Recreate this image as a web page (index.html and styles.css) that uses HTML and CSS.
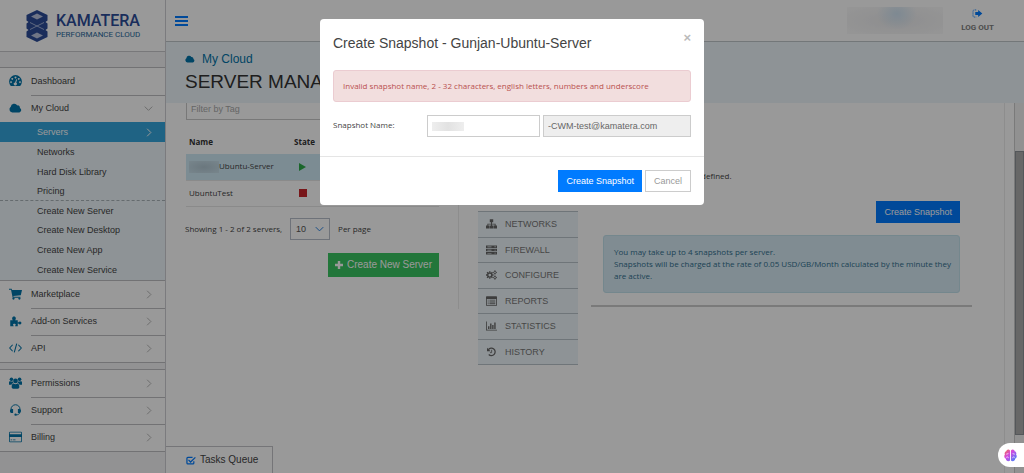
FILE: index.html
```html
<!DOCTYPE html>
<html lang="en">
<head>
<meta charset="utf-8">
<title>Server Management</title>
<link rel="stylesheet" href="styles.css">
</head>
<body>
<svg class="sprite" aria-hidden="true">
  <symbol id="cloud" viewBox="0 0 16 12"><path d="M4 11.5A3.8 3.8 0 0 1 2.2 4.6 4.3 4.3 0 0 1 10.200 2.800 2.600 2.600 0 0 1 13.400 5.900 3 3 0 0 1 12.800 11.500Z"/></symbol>
  <symbol id="gauge" viewBox="0 0 16 14"><path fill-rule="evenodd" d="M2.200 13A7.900 7.900 0 1 1 13.800 13ZM8 1.600a1.100 1.100 0 1 0 .01 0ZM4 3.300a1.100 1.100 0 1 0 .01 0ZM2.500 7.200a1.100 1.100 0 1 0 .01 0ZM12 3.300a1.100 1.100 0 1 0 .01 0ZM13.500 7.200a1.100 1.100 0 1 0 .01 0ZM8.900 4.700 7.500 8.700a1.900 1.900 0 1 0 1.400.4L10 5Z"/></symbol>
  <symbol id="cart" viewBox="0 0 16 14"><path d="M0 .5h3.300l.4 1.500H16l-1.500 6.500-9.200 1 .3 1H14v1H4.500L2.500 1.800H0Z"/><circle cx="5.500" cy="12.600" r="1.400"/><circle cx="12.800" cy="12.600" r="1.400"/></symbol>
  <symbol id="puzzle" viewBox="0 0 16 16"><path d="M1 7h3.500C3 5.500 3 2 6 2s3 3.500 1.500 5H11v3c1 0 1-1.500 3-1.500 2.500 0 2.500 4 0 4-2 0-2-1.500-3-1.500v4H7.500c0-1 .8-1.500.8-2.300 0-1.600-3.600-1.600-3.600 0 0 .8.8 1.300.8 2.300H1Z"/></symbol>
  <symbol id="code" viewBox="0 0 16 12"><path class="line" d="M4.500 2 .8 6l3.700 4M11.500 2l3.700 4-3.700 4M9.500.7l-3 10.600"/></symbol>
  <symbol id="users" viewBox="0 0 16 14"><circle cx="3" cy="2.500" r="2.200"/><circle cx="13" cy="2.500" r="2.200"/><circle cx="8" cy="4.500" r="2.900"/><path d="M0 9V6.500C0 5 1 4.500 2 4.900c1 .5 2 .4 2.600 0 0 1 .3 1.600.8 2.200C4 7.300 3.500 8 3.200 9ZM16 9V6.500c0-1.500-1-2-2-1.600-1 .5-2 .4-2.600 0 0 1-.3 1.600-.8 2.200 1.400.2 1.900.9 2.200 1.900ZM3.300 12c0-3 1-4.500 2.400-4.300 1.500 1 3.100 1 4.600 0 1.400-.2 2.400 1.300 2.400 4.300 0 1.300-.7 2-2 2H5.300c-1.300 0-2-.7-2-2Z"/></symbol>
  <symbol id="headset" viewBox="0 0 16 16"><path class="line" d="M2 9V7a6 6 0 0 1 12 0v2M13.500 11c0 2.500-2 3.500-5 3.500"/><path d="M3 6.500h1.800V12H3C0 12-.3 6.500 3 6.500ZM13 6.500h-1.800V12H13c3 0 3.300-5.500 0-5.500Z"/><circle cx="8" cy="14.300" r="1.500"/></symbol>
  <symbol id="card" viewBox="0 0 16 13"><path fill-rule="evenodd" d="M1 0h14l1 1v11l-1 1H1l-1-1V1ZM1 1v2h14V1ZM1 6.500V12h14V6.500ZM2 9.500h2v1H2ZM5 9.500h3v1H5Z"/></symbol>
  <symbol id="right" viewBox="0 0 8 12"><path class="line" d="m1.500 1 5 5-5 5"/></symbol>
  <symbol id="down" viewBox="0 0 12 8"><path class="line" d="m1 1.500 5 5 5-5"/></symbol>
  <symbol id="logout" viewBox="0 0 16 14"><path class="line dash" d="M6 1.500H3Q1 1.500 1 3.500v7q0 2 2 2h3"/><path d="M4.500 4.500H9V1.500L15.500 7 9 12.500v-3H4.500Z"/></symbol>
  <symbol id="sitemap" viewBox="0 0 16 14"><path d="M5.500 0h5v4.500H8.700v2H14V9h2v4.500h-5V9h1.700V7.700H8.700V9h1.800v4.500h-5V9h1.800V7.700H3.300V9H5v4.500H0V9h2V6.500h5.300v-2H5.500Z"/></symbol>
  <symbol id="rows" viewBox="0 0 16 14"><path fill-rule="evenodd" d="M0 .5h16v3.700H0ZM0 5.200h16v3.700H0ZM0 9.900h16v3.600H0ZM2 1.900v1h6v-1ZM2 6.600v1h6v-1ZM2 11.200v1h6v-1ZM12.500 1.700v1.200h1.500V1.700ZM12.500 6.500v1.200h1.500V6.500ZM12.500 11v1.200h1.500V11Z"/></symbol>
  <symbol id="cogs" viewBox="0 0 16 14"><circle class="ring" cx="5.500" cy="7" r="3"/><path class="teeth" d="M5.500 1.500v2M5.500 10.500v2M0 7h2M9 7h2M1.600 3.100 3 4.500M8 9.500l1.400 1.400M1.600 10.900 3 9.500M8 4.500l1.400-1.400"/><circle class="ring thin" cx="13" cy="3.300" r="1.700"/><circle class="ring thin" cx="13" cy="10.700" r="1.700"/><path class="teeth thin" d="M13 0v1.500M13 5v1.500M10 3.300h1.200M14.800 3.300H16M13 7.500V9M13 12.500V14M10 10.700h1.200M14.800 10.700H16"/></symbol>
  <symbol id="table" viewBox="0 0 16 14"><path fill-rule="evenodd" d="M0 1q0-1 1-1h14q1 0 1 1v12q0 1-1 1H1q-1 0-1-1ZM1.200 4v8.800h13.600V4ZM2.500 5h1.300v1.300H2.500ZM5 5h8.500v1.300H5ZM2.500 7.700h1.300V9H2.500ZM5 7.700h8.500V9H5ZM2.500 10.300h1.300v1.300H2.500ZM5 10.300h8.500v1.300H5Z"/></symbol>
  <symbol id="chart" viewBox="0 0 16 13"><path d="M0 0h1.200v11.800H16V13H0ZM3 7h2v4H3ZM6 3h2v8H6ZM9 5h2v6H9ZM12 1.500h2V11h-2Z"/></symbol>
  <symbol id="history" viewBox="0 0 16 16"><path class="arc" d="M3 4.200A6 6 0 1 1 3.600 12"/><path d="M.8 1v5.800h5.700Z"/><path class="line" d="M8.200 4.500V9H5.500"/></symbol>
  <symbol id="check" viewBox="0 0 16 14"><path class="arc" d="M12.500 8v3q0 1.500-1.500 1.500H3Q1.500 12.500 1.500 11V3.500Q1.500 2 3 2h7.500M4 6l3.300 3.400L15 2"/></symbol>
</svg>

<div class="app">
  <aside class="sidebar">
    <div class="brand">
      <svg class="brand-mark" viewBox="0 0 24 34" aria-hidden="true">
        <path d="M12 1 22.500 6v5.500L20.500 13l2 1.500v5L20.500 21l2 1.500V28L12 33 1.500 28v-5.500l2-1.500-2-1.500v-5l2-1.500-2-1.500V6Z"/>
        <path class="brand-hole" d="m12 4.500 6 3-6 3-6-3ZM12 23.500l6 3-6 3-6-3Z"/>
        <path class="brand-gap" d="M5 13.500l7 3.500 7-3.500M5 20.500l7-3.500 7 3.500"/>
      </svg>
      <div><div class="brand-name">KAMATERA</div><div class="brand-sub">PERFORMANCE CLOUD</div></div>
    </div>
    <nav class="menu">
      <ul class="group">
        <li><a href="#"><svg class="icon"><use href="#gauge"/></svg><span>Dashboard</span></a></li>
        <li><a href="#"><svg class="icon"><use href="#cloud"/></svg><span>My Cloud</span><svg class="arrow wide"><use href="#down"/></svg></a></li>
      </ul>
      <ul class="submenu">
        <li class="active"><a href="#">Servers<svg class="arrow"><use href="#right"/></svg></a></li>
        <li><a href="#">Networks</a></li>
        <li><a href="#">Hard Disk Library</a></li>
        <li><a href="#">Pricing</a></li>
        <li class="split"><a href="#">Create New Server</a></li>
        <li><a href="#">Create New Desktop</a></li>
        <li><a href="#">Create New App</a></li>
        <li><a href="#">Create New Service</a></li>
      </ul>
      <ul class="group">
        <li><a href="#"><svg class="icon"><use href="#cart"/></svg><span>Marketplace</span><svg class="arrow"><use href="#right"/></svg></a></li>
        <li><a href="#"><svg class="icon"><use href="#puzzle"/></svg><span>Add-on Services</span><svg class="arrow"><use href="#right"/></svg></a></li>
        <li><a href="#"><svg class="icon"><use href="#code"/></svg><span>API</span><svg class="arrow"><use href="#right"/></svg></a></li>
      </ul>
      <ul class="group spaced">
        <li><a href="#"><svg class="icon"><use href="#users"/></svg><span>Permissions</span><svg class="arrow"><use href="#right"/></svg></a></li>
        <li><a href="#"><svg class="icon"><use href="#headset"/></svg><span>Support</span><svg class="arrow"><use href="#right"/></svg></a></li>
        <li><a href="#"><svg class="icon"><use href="#card"/></svg><span>Billing</span><svg class="arrow"><use href="#right"/></svg></a></li>
      </ul>
    </nav>
  </aside>

  <div class="main">
    <header class="topbar">
      <button class="burger" aria-label="Toggle menu"><i></i><i></i><i></i></button>
      <div class="account"></div>
      <a class="logout" href="#"><svg><use href="#logout"/></svg>LOG OUT</a>
    </header>
    <div class="heading">
      <a class="crumb" href="#"><svg><use href="#cloud"/></svg>My Cloud</a>
      <h1>SERVER MANAGEMENT</h1>
    </div>
    <div class="body">
      <div class="content">
        <section class="servers">
          <input class="filter" type="text" placeholder="Filter by Tag" aria-label="Filter by Tag">
          <table>
            <thead><tr><th>Name</th><th class="state">State</th></tr></thead>
            <tbody>
              <tr class="selected"><td><span class="redacted"></span>Ubuntu-Server</td><td class="state"><span class="play"></span></td></tr>
              <tr><td>UbuntuTest</td><td class="state"><span class="stop"></span></td></tr>
            </tbody>
          </table>
          <div class="pager">
            <span>Showing 1 - 2 of 2 servers,</span>
            <span class="select"><select id="per-page"><option>10</option></select><svg><use href="#down"/></svg></span>
            <label for="per-page">Per page</label>
          </div>
          <button class="create"><svg viewBox="0 0 10 10"><path d="M3.500 0h3v3.500H10v3H6.500V10h-3V6.500H0v-3h3.500Z"/></svg>Create New Server</button>
        </section>
        <nav class="tabs">
          <a href="#"><svg><use href="#sitemap"/></svg>NETWORKS</a>
          <a href="#"><svg><use href="#rows"/></svg>FIREWALL</a>
          <a href="#"><svg><use href="#cogs"/></svg>CONFIGURE</a>
          <a href="#"><svg><use href="#table"/></svg>REPORTS</a>
          <a href="#"><svg><use href="#chart"/></svg>STATISTICS</a>
          <a href="#"><svg><use href="#history"/></svg>HISTORY</a>
        </nav>
        <section class="snapshots">
          <p class="empty">There are no snapshots defined.</p>
          <button class="primary">Create Snapshot</button>
          <p class="info">You may take up to 4 snapshots per server.<br>Snapshots will be charged at the rate of 0.05 USD/GB/Month calculated by the minute they are active.</p>
        </section>
      </div>
      <div class="scroll"><div class="thumb"></div></div>
    </div>
    <button class="tasks"><svg><use href="#check"/></svg>Tasks Queue</button>
  </div>
</div>

<div class="backdrop">
  <form class="modal" role="dialog" aria-labelledby="modal-title">
    <div class="modal-head"><h2 id="modal-title">Create Snapshot - Gunjan-Ubuntu-Server</h2><button type="button" class="close" aria-label="Close">×</button></div>
    <div class="error" role="alert">Invalid snapshot name, 2 - 32 characters, english letters, numbers and underscore</div>
    <div class="field">
      <label for="name">Snapshot Name:</label>
      <div class="name-box"><input id="name" type="text"><span class="smudge"></span></div>
      <input class="suffix" type="text" value="-CWM-test@kamatera.com" aria-label="Name suffix" readonly>
    </div>
    <div class="modal-foot"><button type="button" class="primary">Create Snapshot</button><button type="button" class="cancel">Cancel</button></div>
  </form>
</div>

<button class="assistant" aria-label="Assistant">
  <svg viewBox="0 0 14 14">
    <defs><linearGradient id="brain" x1="0" y1="0" x2="1" y2="1"><stop offset="0" stop-color="#f0703c"/><stop offset=".4" stop-color="#d54ae0"/><stop offset="1" stop-color="#3288ff"/></linearGradient></defs>
    <path fill="url(#brain)" d="M6.500 1.500C5-.5 2.500.8 2.500 2.500.8 3 .3 5 1 6-.3 7.500.3 10 2 10.500 2 13 5 14 6.500 12.300ZM7.500 1.500C9-.5 11.500.8 11.500 2.500 13.200 3 13.700 5 13 6c1.300 1.500.7 4-1 4.500 0 2.500-3 3.500-4.500 1.800Z"/>
    <path class="fold" d="M2.500 5.500Q4 6 4.500 4.500M2.500 9q1.500-1 2.500.5M11.500 5.500Q10 6 9.500 4.500M11.500 9Q10 8 9 9.500"/>
  </svg>
</button>
</body>
</html>
```
FILE: styles.css
```css
* { box-sizing: border-box; }
:root { --arial: "Liberation Sans", Arial, sans-serif; --small: "Open Sans", "Liberation Sans", sans-serif; --pale: #edf5fa; --blue: #007bff; }
html, body { height: 100%; }
body { margin: 0; overflow: hidden; background: #fff; color: #444; font: 9px/14px var(--arial); }
button, input, select { font: inherit; border-radius: 0; }
button { cursor: pointer; }
a { color: inherit; text-decoration: none; }
ul { list-style: none; margin: 0; padding: 0; }
h1, h2, p { margin: 0; font-weight: 400; }
svg { fill: currentColor; flex: none; }
.sprite { position: absolute; width: 0; height: 0; }
.line { fill: none; stroke: currentColor; stroke-width: 1.300; }
.dash { stroke-dasharray: 2 1; }
.arc { fill: none; stroke: currentColor; stroke-width: 2; }
.ring { fill: none; stroke: currentColor; stroke-width: 2; }
.teeth { stroke: currentColor; stroke-width: 2; }
.thin { stroke-width: 1.200; }

.app { display: grid; grid-template-columns: 166px 1fr; height: 100%; }
.sidebar { background: #f4f4f5; border-right: 1px solid #cdcdd2; }
.brand { display: flex; align-items: center; gap: 7px; height: 52px; padding-left: 25px; background: #fff; border-bottom: 1px solid #c8c8cc; color: #2c4c98; }
.brand-mark { width: 24px; height: 34px; }
.brand-hole { fill: #b9c4e0; }
.brand-gap { fill: none; stroke: #9dadd4; stroke-width: 1; }
.brand-name { font: 500 16px/18px Roboto, sans-serif; }
.brand-sub { font: 400 8px/10px Roboto, sans-serif; color: #28689c; }
.menu { padding-top: 15px; }
.group { background: #fff; border-top: 1px solid #bebec2; }
.group a { display: flex; align-items: center; height: 27px; padding: 0 12px 1px 9px; }
.group span { flex: 1; display: flex; align-items: center; }
.group li + li { background: linear-gradient(#bebec2, #bebec2) 31px 0 / 100% 1px no-repeat; }
.icon { width: 13px; height: 12px; margin-right: 9px; color: #0073a8; }
.arrow { width: 8px; height: 9px; color: #b4b4b4; }
.arrow.wide { width: 9px; height: 7px; }
.spaced { margin-top: 6px; border-bottom: 1px solid #bebec2; }
.group:nth-child(3) { border-bottom: 1px solid #bebec2; }
.submenu { background: var(--pale); }
.submenu a { display: flex; align-items: center; justify-content: space-between; height: 20px; padding: 0 12px 0 37px; }
.submenu li:nth-child(n+3) a { height: 19px; }
.submenu li:nth-child(n+6) a { height: 20px; }
.submenu .active { background: #34a5dc; color: #fff; }
.submenu .active .arrow { color: #fff; }
.submenu .split { border-top: 1px dashed #a9b3b8; }

.main { display: flex; flex-direction: column; min-width: 0; min-height: 0; }
.topbar { display: flex; align-items: center; flex: none; height: 42px; padding: 0 30px 0 9px; border-bottom: 1px solid #c0c6ca; }
.burger { display: grid; gap: 2px; padding: 0; border: 0; background: none; width: 13px; }
.burger i { height: 2px; background: var(--blue); }
.account { width: 96px; height: 27px; margin-left: auto; margin-right: 18px; background: radial-gradient(ellipse 20px 16px at 52% 25%, #d2e5f4, transparent), radial-gradient(ellipse at center, #ececee, #fafafa); }
.logout { display: flex; flex-direction: column; align-items: center; color: #808080; font: 700 8px/10px Roboto, sans-serif; gap: 5px; }
.logout svg { width: 11px; height: 9px; color: var(--blue); }
.heading { flex: none; height: 61px; padding: 10px 19px; background: var(--pale); }
.crumb { display: flex; align-items: center; gap: 7px; font-size: 12px; line-height: 14px; color: #0073a8; }
.crumb svg { width: 10px; height: 8px; }
h1 { padding-top: 4px; font-size: 19px; line-height: 24px; color: #333; }
.body { display: flex; flex: 1; min-height: 0; overflow: hidden; }
.content { display: grid; grid-template-columns: 274px 120px 1fr; align-items: start; flex: 1; margin-right: 9px; padding-left: 19px; border-right: 1px solid #ebebeb; }
.servers { height: 206px; border-right: 1px solid #ececec; padding-right: 19px; font: 500 8px/12px var(--small); display: flex; flex-direction: column; }
.filter { height: 17px; margin-left: 1px; padding: 0 4px 4px; border: 1px solid #c8c8c8; border-top: 0; font: 9px/12px var(--arial); background: #fff; }
.filter::placeholder { color: #aaa; }
table { border-collapse: collapse; margin: 9px 0 0 1px; }
th { text-align: left; height: 25px; padding: 0 3px; font-weight: 700; color: #333; }
td { height: 26px; padding: 0 3px; border-bottom: 1px solid #e6e6e6; }
.state { width: 148px; }
.selected { background: #cfe9f5; }
.redacted { display: inline-block; width: 30px; height: 12px; vertical-align: middle; background: radial-gradient(ellipse, #b2c7d2, #c8dfea); }
.play { display: block; margin-left: 5px; width: 0; border: 4px solid transparent; border-left: 7px solid #2cab48; border-right: 0; }
.stop { display: block; margin-left: 5px; width: 8px; height: 8px; background: #c8252b; }
.pager { display: flex; align-items: center; gap: 8px; margin-top: 11px; }
.select { display: flex; align-items: center; position: relative; }
.select select { appearance: none; width: 40px; height: 22px; padding: 0 5px; border: 1px solid #b7bfca; background: #fff; color: #555; font: 9px/14px var(--arial); }
.select svg { position: absolute; right: 6px; width: 9px; height: 6px; color: #2680e0; pointer-events: none; }
.create { display: flex; align-items: center; gap: 4px; align-self: flex-end; margin-top: 13px; height: 24px; padding: 0 7px; border: 0; background: #3ac561; color: #fff; font: 10px/14px var(--arial); }
.create svg { width: 8px; height: 8px; }
.tabs { display: grid; grid-auto-rows: 1fr; width: 100px; margin: 108px 0 0 19px; min-height: 154px; border-top: 1px solid #bac4ca; color: #777; }
.tabs a { display: flex; align-items: center; gap: 8px; padding-left: 8px; background: var(--pale); border-bottom: 1px solid #bac4ca; }
.tabs svg { width: 11px; height: 10px; color: #666; }
.snapshots { display: flex; flex-direction: column; align-items: flex-end; margin: 60px 32px 0 12px; padding: 7px 12px 12px; border-bottom: 2px solid #ccc; font: 500 8px/12px var(--small); }
.empty { align-self: stretch; padding-left: 8px; }
.snapshots .primary { margin-top: 19px; }
.info { margin-top: 12px; align-self: stretch; padding: 10px 4px 10px 10px; background: #d5e9f3; border: 1px solid #c2e1ec; border-radius: 3px; color: #31708f; }
.primary, .cancel { height: 22px; padding: 0 7px; font: 9px/14px var(--arial); }
.primary { border: 1px solid var(--blue); background: var(--blue); color: #fff; }
.cancel { padding: 0 8px; border: 1px solid #ccc; background: #fff; color: #999; }
.scroll { width: 10px; padding-top: 48px; background: #f2f2f2; border-left: 1px solid #ccc; }
.thumb { height: 284px; background: #acacac; border: 1px solid #8d9196; }
.tasks { position: absolute; left: 166px; bottom: 0; display: flex; align-items: center; gap: 4px; height: 27px; padding: 0 14px 0 20px; border: solid #c4c4c8; border-width: 1px 1px 0 0; background: #fff; color: #444; font-size: 10px; }
.tasks svg { width: 10px; height: 9px; color: var(--blue); }

.backdrop { position: fixed; inset: 0; display: flex; justify-content: center; align-items: flex-start; padding-top: 19px; background: rgba(0,0,0,.4); }
.modal { width: 384px; background: #fff; border-radius: 4px; font: 500 8px/12px var(--small); }
.modal-head { display: flex; justify-content: space-between; align-items: flex-start; padding: 13px 13px 0; }
h2 { font: 14px/22px var(--arial); color: #444; }
.close { padding: 0; border: 0; background: none; font: 700 13px/12px var(--arial); color: #bbb; }
.error { margin: 16px 13px 0; padding: 9px; border: 1px solid #ebccd1; border-radius: 3px; background: #f2dede; color: #b9504e; }
.field { display: grid; grid-template-columns: 91px 113px 1fr; gap: 3px; padding: 13px 13px 19px; border-bottom: 1px solid #e5e5e5; }
.field label { padding-top: 4px; }
.field input { width: 100%; height: 22px; padding: 0 4px; border: 1px solid #ccc; background: #fff; color: #666; font: 9px/14px var(--arial); }
.field .suffix { background: #eee; }
.name-box { position: relative; }
.smudge { position: absolute; left: 5px; top: 7px; width: 32px; height: 9px; background: linear-gradient(90deg, #eee, #e2e2e2, #eee); }
.modal-foot { display: flex; justify-content: flex-end; gap: 3px; padding: 13px; }
.assistant { position: fixed; right: 0; bottom: 6px; display: flex; align-items: center; width: 26px; height: 24px; padding: 0 6px; border: 0; border-radius: 12px 0 0 12px; background: #fff; }
.assistant svg { width: 13px; height: 13px; }
.fold { fill: none; stroke: #fff; stroke-width: .8; }
```
